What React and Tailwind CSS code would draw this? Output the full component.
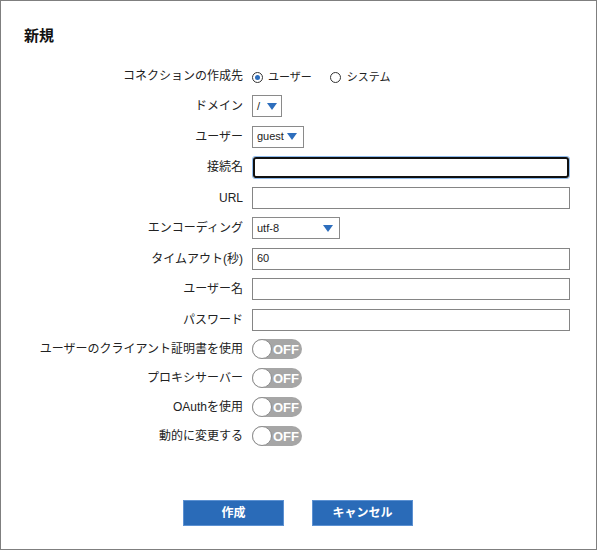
import React from "react";

const FONT = { fontFamily: '"Liberation Sans", "Noto Sans CJK JP", sans-serif' };

function Caret() {
  return (
    <svg width="10" height="7" viewBox="0 0 10 7" className="shrink-0">
      <polygon points="0,0 10,0 5,7" fill="#2d6ebd" />
    </svg>
  );
}

function Select({ value, width, pr }) {
  return (
    <div className={`h-[22px] ${width} border border-[#8a8a8a] bg-white flex items-center justify-between pl-[4px] ${pr} text-[11px] text-[#222]`}>
      <span>{value}</span>
      <Caret />
    </div>
  );
}

function TextBox({ value, focused }) {
  if (focused) {
    return (
      <div className="h-[23px] w-[318px] rounded-[3px] border border-[#8fbbec] p-0">
        <div className="h-full w-full rounded-[3px] border-2 border-[#111]" />
      </div>
    );
  }
  return (
    <div className="h-[22px] w-[318px] border border-[#858585] bg-white flex items-center pl-[4px] text-[11px] text-[#222]">
      {value}
    </div>
  );
}

function Toggle() {
  return (
    <div className="w-[50px] h-[20px] rounded-full bg-[#a6a6a6] flex items-center">
      <span className="w-[20px] h-[20px] rounded-full bg-white border-[1.5px] border-[#8e8e8e] shrink-0" />
      <span className="ml-[1px] text-white font-bold text-[13px] leading-none">OFF</span>
    </div>
  );
}

function Row({ label, children, h = "h-[22px]" }) {
  return (
    <div className={`flex items-center ${h}`}>
      <div className="w-[242px] text-right text-[12px] text-[#222] leading-none whitespace-nowrap">{label}</div>
      <div className="ml-[9px] flex items-center">{children}</div>
    </div>
  );
}

function Radio({ checked }) {
  return (
    <span className="w-[11px] h-[11px] rounded-full border border-[#333] bg-white flex items-center justify-center">
      {checked && <span className="w-[5px] h-[5px] rounded-full bg-[#2d6ebd]" />}
    </span>
  );
}

export default function App() {
  return (
    <div style={FONT} className="w-[597px] h-[550px] border border-[#7f7f7f] bg-white">
      <h1 className="pt-[27px] pl-[23px] text-[15px] font-bold leading-[15px] text-[#111]">新規</h1>

      <div className="mt-[23px] flex flex-col gap-[8.5px]">
        <Row label="コネクションの作成先" h="h-[20.5px]">
          <div className="flex items-center text-[11px] text-[#222] pt-[2px]">
            <Radio checked />
            <span className="ml-[5px]">ユーザー</span>
            <span className="ml-[18px]"><Radio /></span>
            <span className="ml-[6px]">システム</span>
          </div>
        </Row>
        <Row label="ドメイン">
          <Select value="/" width="w-[30px]" pr="pr-[4px]" />
        </Row>
        <Row label="ユーザー">
          <Select value="guest" width="w-[52px]" pr="pr-[6px]" />
        </Row>
        <Row label="接続名">
          <TextBox focused />
        </Row>
        <Row label="URL">
          <TextBox />
        </Row>
        <Row label="エンコーディング">
          <Select value="utf-8" width="w-[88px]" pr="pr-[6px]" />
        </Row>
        <Row label="タイムアウト(秒)">
          <TextBox value="60" />
        </Row>
        <Row label="ユーザー名">
          <TextBox />
        </Row>
        <Row label="パスワード">
          <TextBox />
        </Row>
      </div>

      <div className="mt-[8.5px] flex flex-col gap-[9px]">
        {["ユーザーのクライアント証明書を使用", "プロキシサーバー", "OAuthを使用", "動的に変更する"].map((l) => (
          <Row key={l} label={l} h="h-[20px]">
            <Toggle />
          </Row>
        ))}
      </div>

      <div className="mt-[54px] pl-[182px] flex gap-[28px]">
        <button className="w-[101px] h-[26px] bg-[#2a6bb8] border border-[#5c91d2] text-white font-bold text-[12px]">作成</button>
        <button className="w-[101px] h-[26px] bg-[#2a6bb8] border border-[#5c91d2] text-white font-bold text-[12px]">キャンセル</button>
      </div>
    </div>
  );
}
